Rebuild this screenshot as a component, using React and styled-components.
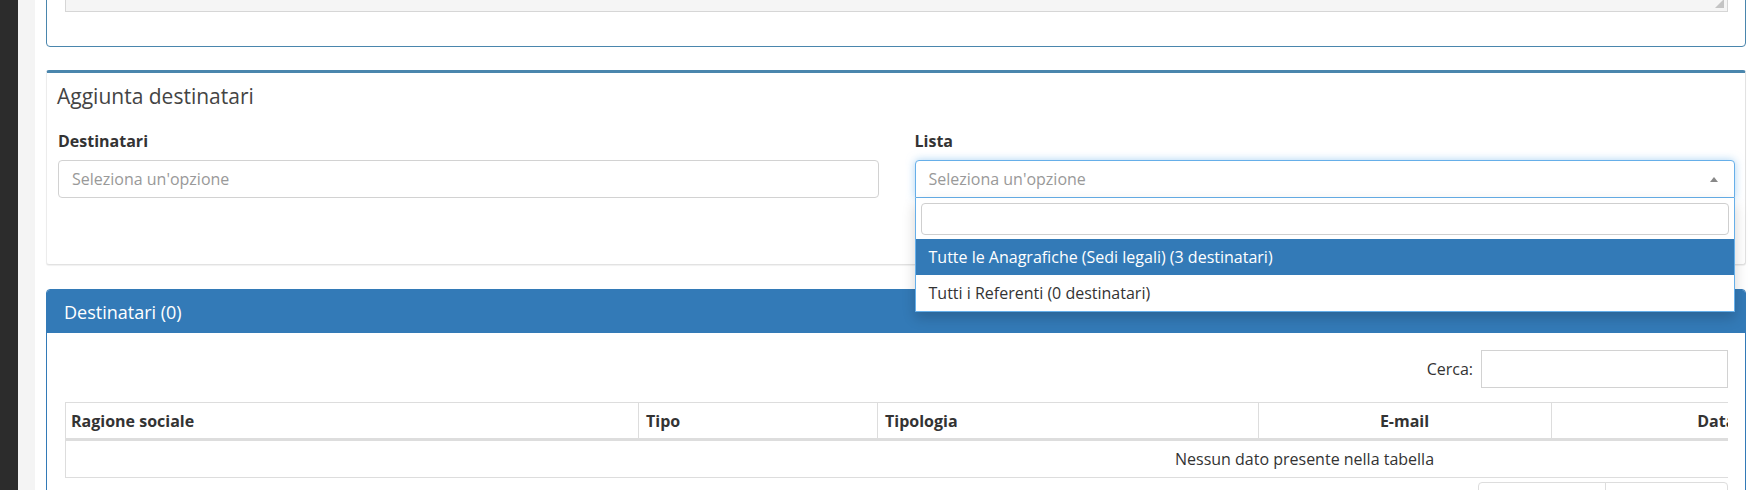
import React from "react";
import styled, { createGlobalStyle } from "styled-components";

const GlobalStyle = createGlobalStyle`
  html, body {
    margin: 0;
    padding: 0;
    height: 490px;
    overflow: hidden;
    background: #ffffff;
  }
  body {
    font-family: "Open Sans", "Noto Sans", "Liberation Sans", sans-serif;
    font-size: 16px;
    color: #333333;
  }
  * { box-sizing: border-box; }
`;

const Page = styled.div`
  display: flex;
  height: 490px;
  overflow: hidden;
`;

const Sidebar = styled.div`
  width: 18px;
  flex: none;
  background: #2c2c2c;
`;

const Gutter = styled.div`
  width: 17px;
  flex: none;
  background: #f4f4f4;
`;

const Content = styled.div`
  flex: 1;
  min-width: 0;
  padding: 0 8px 0 11px;
  display: flex;
  flex-direction: column;
`;

const TopPanel = styled.div`
  margin-top: -60px;
  border: 1px solid #4a86ad;
  border-radius: 4px;
  background: #fff;
`;

const TopPanelBody = styled.div`
  padding: 18px 17px 34px 18px;
`;

const Textarea = styled.div`
  position: relative;
  height: 53px;
  border: 1px solid #d6d6d6;
  background: #f5f5f5;
  &::after {
    content: "";
    position: absolute;
    right: 3px;
    bottom: 3px;
    border-style: solid;
    border-width: 0 0 9px 9px;
    border-color: transparent transparent #c4c4c4 transparent;
  }
`;

const Box = styled.div`
  margin-top: 23px;
  background: #fff;
  border-top: 3px solid #4a86ad;
  border-left: 1px solid #ececec;
  border-right: 1px solid #e2e2e2;
  border-bottom: 1px solid #e2e2e2;
  border-radius: 3px;
  box-shadow: 0 1px 1px rgba(0, 0, 0, 0.06);
`;

const BoxHeader = styled.div`
  padding: 12px 11px 10px 10px;
`;

const BoxTitle = styled.h3`
  margin: 0;
  font-size: 21px;
  line-height: 22px;
  font-weight: 400;
  color: #444;
`;

const BoxBody = styled.div`
  padding: 14px 10px 66px 11px;
`;

const FormGrid = styled.div`
  display: grid;
  grid-template-columns: 1fr 1fr;
  column-gap: 36px;
`;

const Field = styled.div`
  position: relative;
  display: flex;
  flex-direction: column;
`;

const Label = styled.label`
  font-weight: 700;
  font-size: 16px;
  line-height: 21px;
  color: #333;
  margin-bottom: 8px;
`;

const SelectBox = styled.div`
  position: relative;
  height: 38px;
  display: flex;
  align-items: center;
  padding: 0 13px;
  background: #fff;
  border: 1px solid ${(p) => (p.$open ? "#66afe9" : "#d2d2d2")};
  border-radius: ${(p) => (p.$open ? "4px 4px 0 0" : "4px")};
  box-shadow: ${(p) =>
    p.$open ? "0 0 8px rgba(102, 175, 233, 0.55)" : "none"};
`;

const Placeholder = styled.span`
  color: #999;
  font-size: 16px;
`;

const ArrowUp = styled.span`
  position: absolute;
  right: 16px;
  top: 16px;
  border-style: solid;
  border-width: 0 4px 5px 4px;
  border-color: transparent transparent #888 transparent;
`;

const Dropdown = styled.div`
  position: absolute;
  left: 0;
  right: 0;
  top: 100%;
  z-index: 10;
  background: #fff;
  border: 1px solid #66afe9;
  border-top: none;
  box-shadow: 0 6px 12px rgba(0, 0, 0, 0.18);
`;

const DropdownSearch = styled.div`
  margin: 5px 5px 4px 5px;
  height: 32px;
  border: 1px solid #cfcfcf;
  border-radius: 4px;
  background: #fff;
`;

const Option = styled.div`
  height: 36px;
  display: flex;
  align-items: center;
  padding: 0 13px;
  font-size: 16px;
  color: ${(p) => (p.$active ? "#fff" : "#333")};
  background: ${(p) => (p.$active ? "#337ab7" : "#fff")};
`;

const Panel = styled.div`
  margin-top: 24px;
  border: 1px solid #337ab7;
  border-radius: 4px;
  background: #fff;
`;

const PanelHeading = styled.div`
  height: 43px;
  display: flex;
  align-items: center;
  padding: 0 17px;
  background: #337ab7;
  color: #fff;
  font-size: 18px;
  border-radius: 3px 3px 0 0;
`;

const PanelBody = styled.div`
  padding: 17px 17px 0 18px;
`;

const SearchRow = styled.div`
  display: flex;
  justify-content: flex-end;
  align-items: center;
  gap: 8px;
  margin-bottom: 14px;
`;

const SearchLabel = styled.span`
  font-size: 16px;
  color: #333;
`;

const SearchInput = styled.div`
  width: 247px;
  height: 38px;
  border: 1px solid #d2d2d2;
  background: #fff;
`;

const TableScroll = styled.div`
  overflow: hidden;
`;

const Table = styled.table`
  width: 2478px;
  border-collapse: collapse;
  font-size: 16px;
  table-layout: fixed;
`;

const Th = styled.th`
  height: 37px;
  padding: 0 8px 0 ${(p) => (p.$first ? "5px" : "7px")};
  text-align: ${(p) => p.$align || "left"};
  font-weight: 700;
  color: #333;
  white-space: nowrap;
  overflow: hidden;
  border: 1px solid #dddddd;
  border-bottom: 3px solid #dddddd;
`;

const Td = styled.td`
  height: 38px;
  text-align: center;
  color: #333;
  border: 1px solid #dddddd;
`;

const PaginationRow = styled.div`
  display: flex;
  justify-content: flex-end;
  margin-top: 4px;
`;

const PageButton = styled.div`
  width: ${(p) => p.$w}px;
  height: 38px;
  border: 1px solid #dddddd;
  margin-left: -1px;
  &:first-child { border-radius: 4px 0 0 4px; }
  &:last-child { border-radius: 0 4px 4px 0; }
`;

const columns = [
  { label: "Ragione sociale", width: 573, align: "left" },
  { label: "Tipo", width: 239, align: "left" },
  { label: "Tipologia", width: 381, align: "left" },
  { label: "E-mail", width: 293, align: "center" },
  { label: "Data invio", width: 374, align: "center" },
  { label: "Stato", width: 618, align: "center" },
];

export default function App() {
  return (
    <>
      <GlobalStyle />
      <Page>
        <Sidebar />
        <Gutter />
        <Content>
          <TopPanel>
            <TopPanelBody>
              <Textarea />
            </TopPanelBody>
          </TopPanel>

          <Box>
            <BoxHeader>
              <BoxTitle>Aggiunta destinatari</BoxTitle>
            </BoxHeader>
            <BoxBody>
              <FormGrid>
                <Field>
                  <Label>Destinatari</Label>
                  <SelectBox>
                    <Placeholder>Seleziona un'opzione</Placeholder>
                  </SelectBox>
                </Field>
                <Field>
                  <Label>Lista</Label>
                  <SelectBox $open>
                    <Placeholder>Seleziona un'opzione</Placeholder>
                    <ArrowUp />
                  </SelectBox>
                  <Dropdown>
                    <DropdownSearch />
                    <Option $active>
                      Tutte le Anagrafiche (Sedi legali) (3 destinatari)
                    </Option>
                    <Option>Tutti i Referenti (0 destinatari)</Option>
                  </Dropdown>
                </Field>
              </FormGrid>
            </BoxBody>
          </Box>

          <Panel>
            <PanelHeading>Destinatari (0)</PanelHeading>
            <PanelBody>
              <SearchRow>
                <SearchLabel>Cerca:</SearchLabel>
                <SearchInput />
              </SearchRow>
              <TableScroll>
                <Table>
                  <colgroup>
                    {columns.map((c) => (
                      <col key={c.label} style={{ width: c.width }} />
                    ))}
                  </colgroup>
                  <thead>
                    <tr>
                      {columns.map((c, i) => (
                        <Th key={c.label} $align={c.align} $first={i === 0}>
                          {c.label}
                        </Th>
                      ))}
                    </tr>
                  </thead>
                  <tbody>
                    <tr>
                      <Td colSpan={columns.length}>
                        Nessun dato presente nella tabella
                      </Td>
                    </tr>
                  </tbody>
                </Table>
              </TableScroll>
              <PaginationRow>
                <PageButton $w={128} />
                <PageButton $w={123} />
              </PaginationRow>
            </PanelBody>
          </Panel>
        </Content>
      </Page>
    </>
  );
}
